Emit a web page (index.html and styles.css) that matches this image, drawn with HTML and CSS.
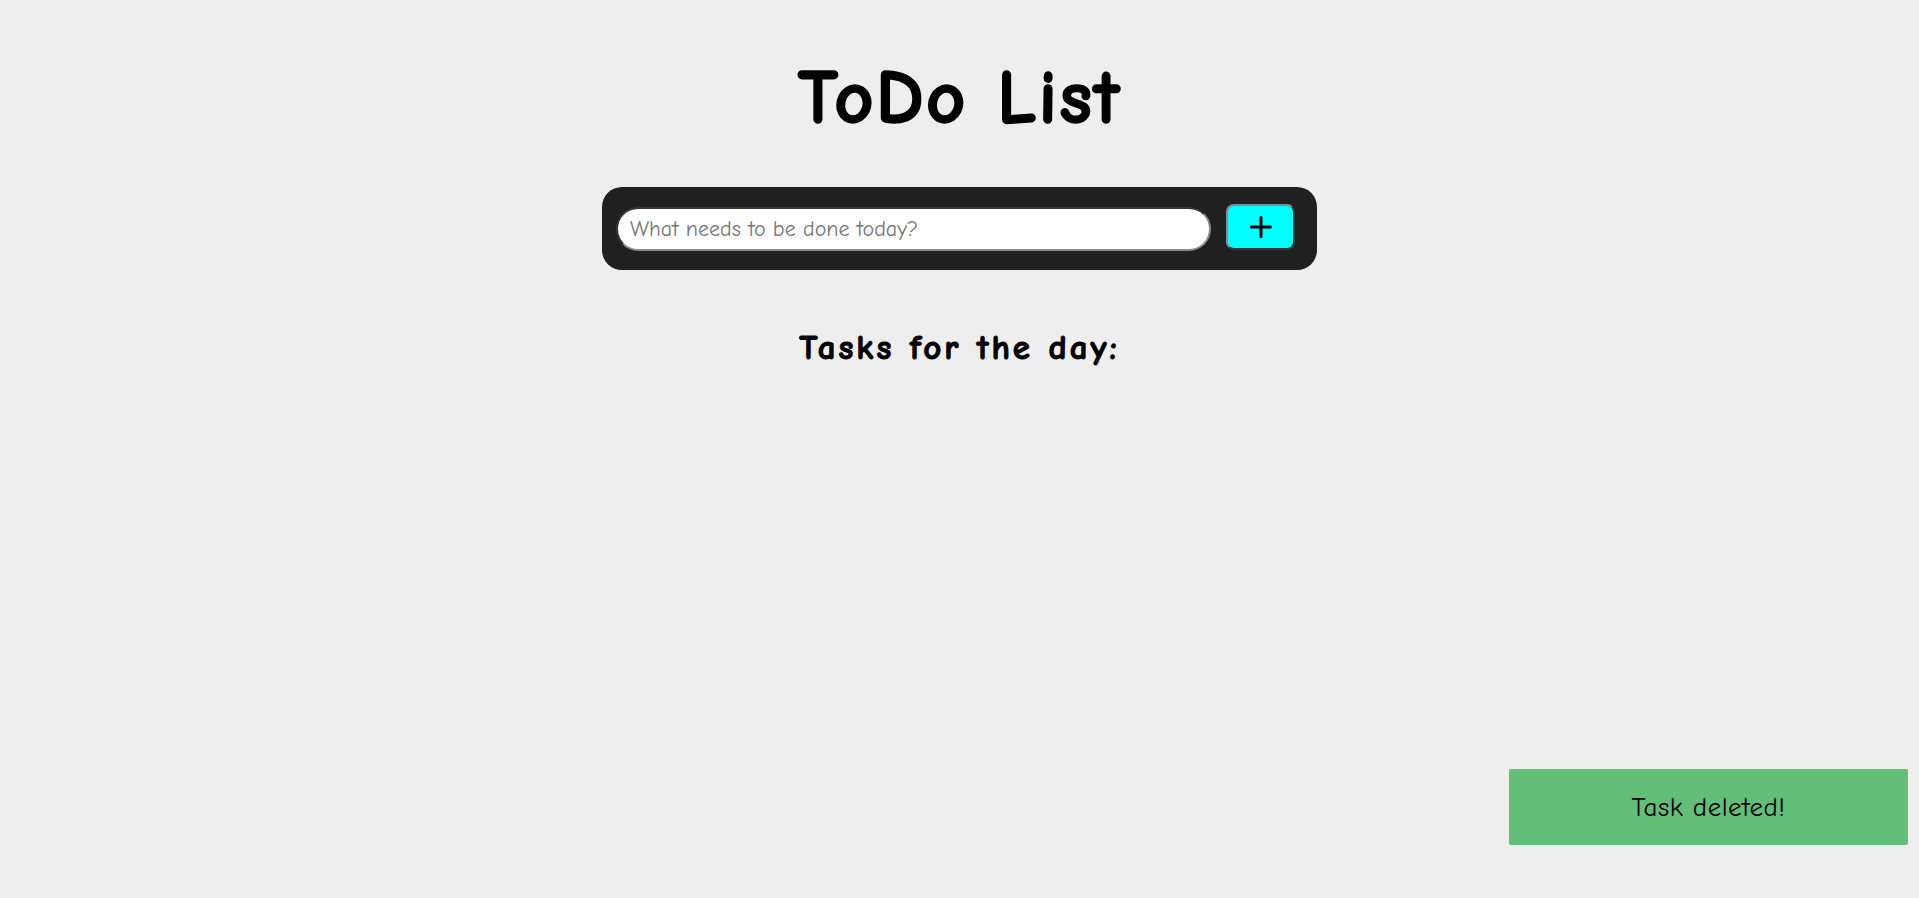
FILE: index.html
```html
<!DOCTYPE html>
<html lang="en">
<head>
<meta charset="utf-8">
<title>ToDo List</title>
<link rel="stylesheet" href="styles.css">
</head>
<body>
<main class="app">
  <h1 class="title">ToDo List</h1>
  <form class="add-bar" onsubmit="return false">
    <input class="task-input" type="text" placeholder="What needs to be done today?">
    <button class="add-btn" type="button" aria-label="Add task">
      <svg width="24" height="24" viewBox="0 0 24 24" aria-hidden="true">
        <path d="M12 2.5 V21.5 M2.5 12 H21.5" stroke="#000" stroke-width="3" stroke-linecap="round" fill="none"/>
      </svg>
    </button>
  </form>
  <h2 class="subtitle">Tasks for the day:</h2>
  <ul class="task-list"></ul>
</main>
<div class="toast">Task deleted!</div>
</body>
</html>
```
FILE: styles.css
```css
html, body {
  margin: 0;
  padding: 0;
}
body {
  background: #eeeeee;
  font-family: "Comic Sans MS", "Comic Neue", "Open Sans", sans-serif;
  color: #000;
  min-height: 898px;
}
.app {
  display: flex;
  flex-direction: column;
  align-items: center;
  padding-top: 48px;
}
.title {
  margin: 0;
  font-size: 77px;
  line-height: 100px;
  font-weight: 700;
  letter-spacing: 2px;
  -webkit-text-stroke: 1.5px #000;
}
.add-bar {
  margin-top: 39px;
  width: 715px;
  height: 83px;
  box-sizing: border-box;
  background: #202020;
  border-radius: 20px;
  display: flex;
  align-items: center;
  padding: 0 22px 0 14px;
  gap: 15px;
}
.task-input {
  flex: 1;
  height: 44px;
  box-sizing: border-box;
  border-radius: 22px;
  border: 2px inset #8a8a8a;
  background: #fff;
  padding: 0 12px;
  font-family: inherit;
  font-size: 22px;
  outline: none;
}
.task-input::placeholder {
  color: #757575;
}
.add-btn {
  width: 69px;
  height: 46px;
  margin-top: -3px;
  box-sizing: border-box;
  background: #00ffff;
  border: 2px outset #8a8a8a;
  border-radius: 8px;
  display: flex;
  align-items: center;
  justify-content: center;
  padding: 0;
  cursor: pointer;
}
.subtitle {
  margin: 58px 0 0;
  font-size: 35px;
  line-height: 40px;
  font-weight: 700;
  letter-spacing: 3px;
  -webkit-text-stroke: 1px #000;
}
.task-list {
  list-style: none;
  margin: 0;
  padding: 0;
}
.toast {
  position: fixed;
  right: 11px;
  bottom: 53px;
  width: 399px;
  height: 76px;
  background: #63bf78;
  border-radius: 2px;
  display: flex;
  align-items: center;
  justify-content: center;
  font-size: 27px;
  letter-spacing: 0.5px;
}
```
